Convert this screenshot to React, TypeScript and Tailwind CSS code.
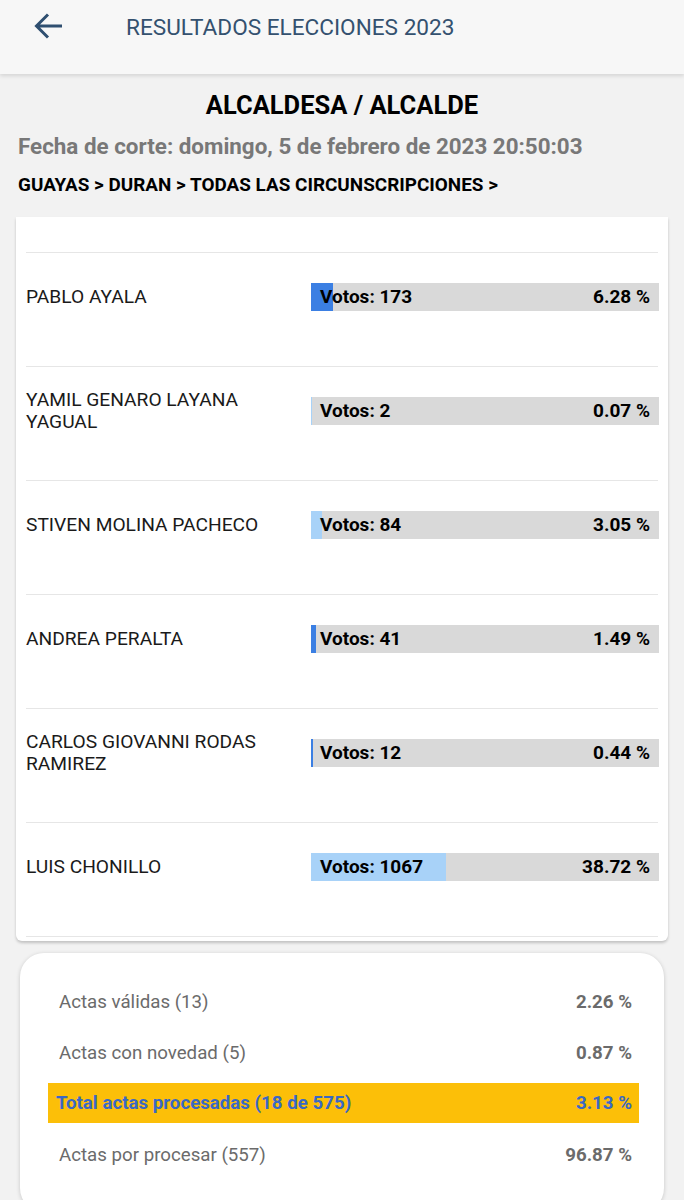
import React from 'react';

interface Candidate {
  name: string;
  votes: number;
  pct: number;
  dark: boolean;
}

const candidates: Candidate[] = [
  { name: 'PABLO AYALA', votes: 173, pct: 6.28, dark: true },
  { name: 'YAMIL GENARO LAYANA YAGUAL', votes: 2, pct: 0.07, dark: false },
  { name: 'STIVEN MOLINA PACHECO', votes: 84, pct: 3.05, dark: false },
  { name: 'ANDREA PERALTA', votes: 41, pct: 1.49, dark: true },
  { name: 'CARLOS GIOVANNI RODAS RAMIREZ', votes: 12, pct: 0.44, dark: true },
  { name: 'LUIS CHONILLO', votes: 1067, pct: 38.72, dark: false },
];

export default function App() {
  return (
    <main className="h-[1200px] bg-[#f2f2f2] font-['Roboto',sans-serif] text-black overflow-hidden">
      {/* Header */}
      <header className="h-[74px] bg-[#f7f7f7] shadow-[0_2px_4px_rgba(0,0,0,0.12)] flex items-start pt-[12px] relative z-10">
        <button className="ml-[32px] w-[32px] h-[28px] flex items-center justify-center text-[#2f4f70]">
          <svg width="30" height="28" viewBox="0 0 30 28" fill="none">
            <path d="M29 14H4M15 2.5L3.5 14L15 25.5" stroke="currentColor" strokeWidth="3" />
          </svg>
        </button>
        <h1 className="ml-[62px] mt-[2px] text-[22.6px] text-[#34516f] leading-[28px]">
          RESULTADOS ELECCIONES 2023
        </h1>
      </header>

      {/* Titles */}
      <div className="pt-[15px] px-[18px]">
        <h2 className="text-center text-[25.5px] font-bold leading-[32px]">ALCALDESA / ALCALDE</h2>
        <p className="mt-[10px] text-[22.4px] font-bold text-[#787878] leading-[30px]">
          Fecha de corte: domingo, 5 de febrero de 2023 20:50:03
        </p>
        <p className="mt-[12px] text-[18.9px] font-bold leading-[24px]">
          GUAYAS &gt; DURAN &gt; TODAS LAS CIRCUNSCRIPCIONES &gt;
        </p>
      </div>

      {/* Candidates card */}
      <section className="mx-[16px] mt-[20px] bg-white rounded-b-[6px] shadow-[0_2px_3px_rgba(0,0,0,0.2)] px-[10px]">
        <div className="h-[36px] border-b border-[#e6e6e6]" />
        {candidates.map((c) => (
          <div key={c.name} className="h-[114px] border-b border-[#e6e6e6]">
            <div className="h-[88px] flex items-center">
              <div className="w-[285px] text-[19.2px] leading-[22px] text-[#1a1a1a] pr-[40px]">{c.name}</div>
              <div className="relative flex-1 h-[28px] bg-[#d9d9d9] mr-[-1px]">
                <div
                  className={c.dark ? 'absolute left-0 top-0 h-full bg-[#3b7fe3]' : 'absolute left-0 top-0 h-full bg-[#a8d2f8]'}
                  style={{ width: `${Math.max(c.pct, 0.3)}%` }}
                />
                <div className="relative h-full flex items-center justify-between px-[9px] text-[19px] font-bold">
                  <span>Votos: {c.votes}</span>
                  <span>{c.pct.toFixed(2)} %</span>
                </div>
              </div>
            </div>
          </div>
        ))}
        <div className="h-[4px]" />
      </section>

      {/* Summary card */}
      <section className="mx-[20px] mt-[12px] bg-white rounded-[24px] shadow-[0_1px_4px_rgba(0,0,0,0.18)] pt-[32px] pb-[40px] pl-[28px] pr-[25px]">
        <div className="flex justify-between items-center h-[34px] pl-[11px] pr-[7px] text-[18.7px] text-[#6b6b6b]">
          <span>Actas válidas (13)</span>
          <span className="font-bold">2.26 %</span>
        </div>
        <div className="flex justify-between items-center h-[34px] mt-[17px] pl-[11px] pr-[7px] text-[18.7px] text-[#6b6b6b]">
          <span>Actas con novedad (5)</span>
          <span className="font-bold">0.87 %</span>
        </div>
        <div className="flex justify-between items-center h-[40px] mt-[13px] pl-[8px] pr-[7px] bg-[#fcbf08] text-[18.7px] font-bold text-[#3a68c4]">
          <span>Total actas procesadas (18 de 575)</span>
          <span>3.13 %</span>
        </div>
        <div className="flex justify-between items-center h-[34px] mt-[15px] pl-[11px] pr-[7px] text-[18.7px] text-[#6b6b6b]">
          <span>Actas por procesar (557)</span>
          <span className="font-bold">96.87 %</span>
        </div>
      </section>
    </main>
  );
}
